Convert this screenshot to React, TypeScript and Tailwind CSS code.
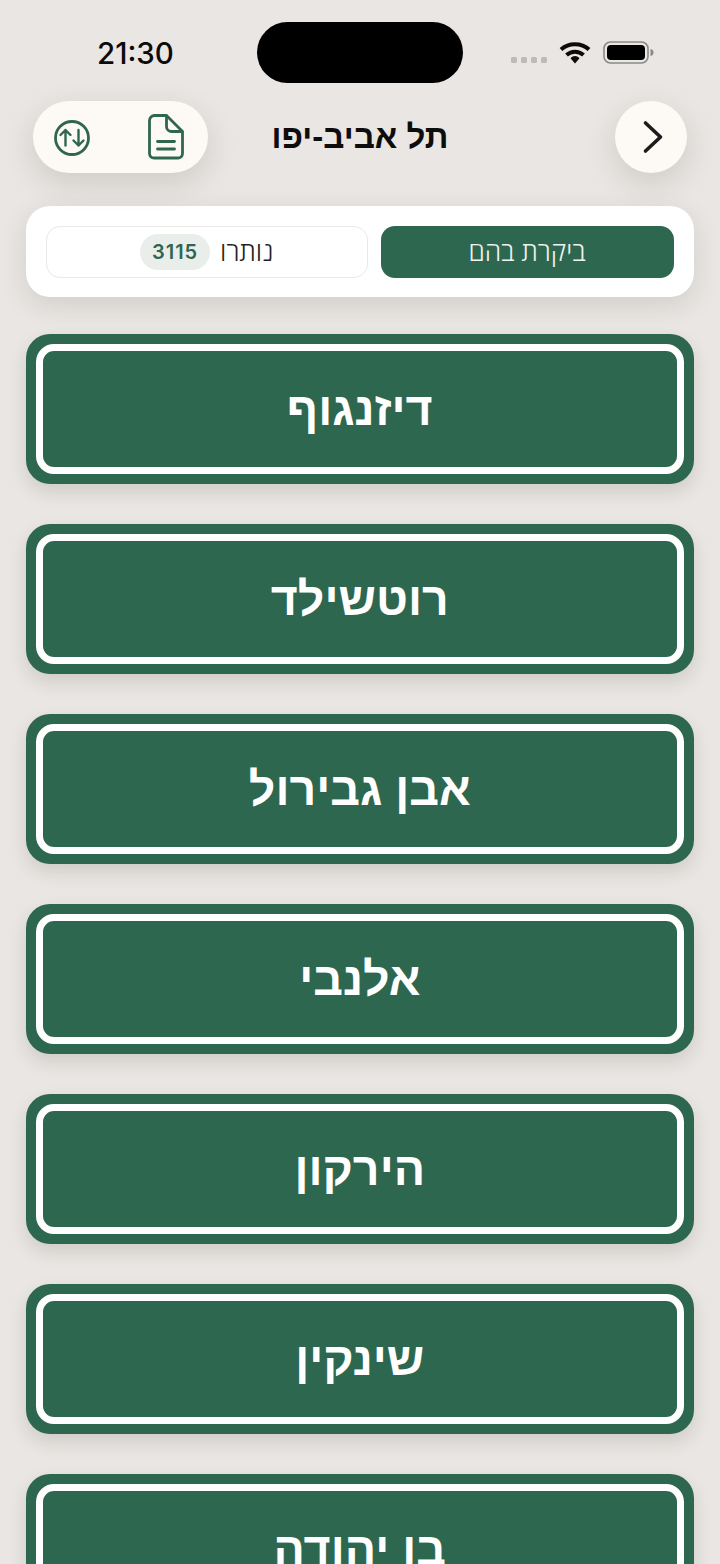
import React from "react";

const streets = ["דיזנגוף", "רוטשילד", "אבן גבירול", "אלנבי", "הירקון", "שינקין", "בן יהודה"];

const StatusBar = () => (
  <div dir="ltr" className="h-[101px] flex items-start relative">
    <div className="ml-[97px] mt-[36px] w-[80px] text-[29.5px] leading-[34px] font-[550] text-[#0b0b0b] font-['Inter',sans-serif]">
      21:30
    </div>
    <div className="ml-[80px] mt-[22px] w-[206px] h-[61px] rounded-full bg-black" />
    <div className="ml-[48px] mt-[57px] flex gap-[4px]">
      <span className="w-[6px] h-[6px] rounded-[1.5px] bg-[#bdbbb9]" />
      <span className="w-[6px] h-[6px] rounded-[1.5px] bg-[#bdbbb9]" />
      <span className="w-[6px] h-[6px] rounded-[1.5px] bg-[#bdbbb9]" />
      <span className="w-[6px] h-[6px] rounded-[1.5px] bg-[#bdbbb9]" />
    </div>
    <svg className="ml-[12px] mt-[40px]" width="32" height="24" viewBox="0 0 32 24" fill="none">
      <path d="M2 9.500C9.500 2.500 22.500 2.500 30 9.500" stroke="#0b0b0b" strokeWidth="4" />
      <path d="M7.500 15C12.500 10.500 19.500 10.500 24.500 15" stroke="#0b0b0b" strokeWidth="4" />
      <path d="M11.500 18.200C14.200 15.400 17.800 15.400 20.500 18.200L16 23.500Z" fill="#0b0b0b" />
    </svg>
    <svg className="ml-[12px] mt-[41px]" width="52" height="23" viewBox="0 0 52 23" fill="none">
      <rect x="1" y="1" width="44" height="21" rx="6.500" stroke="#8a8a88" strokeWidth="1.600" />
      <rect x="4" y="4" width="38" height="15" rx="4" fill="#000" />
      <path d="M47.500 8c2.200.4 3 1.800 3 3.500s-.8 3.100-3 3.500z" fill="#8a8a88" />
    </svg>
  </div>
);

const Header = () => (
  <div className="mx-[32.5px] h-[72px] grid grid-cols-[175px_1fr_175px] items-center relative">
    <button className="w-[72px] h-[72px] mr-[0.5px] pl-[4px] rounded-full bg-[#fdfaf6] flex items-center justify-center shadow-[0_10px_30px_rgba(60,50,40,0.15)]">
      <svg width="22" height="34" viewBox="0 0 22 34" fill="none" stroke="#1c1c1c" strokeWidth="3.600" strokeLinecap="round" strokeLinejoin="round">
        <path d="M3.500 3 18.500 17 3.500 31" />
      </svg>
    </button>
    <h1 className="text-center text-[33px] leading-[40px] font-bold text-[#0d0d0d] font-['Liberation_Sans',sans-serif]">תל אביב-יפו</h1>
    <div className="w-[175px] h-[72px] rounded-full bg-[#fdfaf6] flex items-center justify-between pl-[21.500px] pr-[23.500px] shadow-[0_10px_30px_rgba(60,50,40,0.15)]">
      <svg width="36" height="46" viewBox="0 0 36 46" fill="none" stroke="#2f6650" strokeWidth="2.800" strokeLinecap="round" strokeLinejoin="round">
        <path d="M6.500 1.500h12L34.500 17.500V39.500a4.500 4.500 0 0 1-4.500 4.500H6A4.500 4.500 0 0 1 1.500 39.500V6.500A5 5 0 0 1 6.500 1.500Z" />
        <path d="M18.500 2v10.500a5 5 0 0 0 5 5H34" />
        <path d="M9.500 27.500h17M9.500 35h17" />
      </svg>
      <svg className="mt-[2px]" width="36" height="36" viewBox="0 0 36 36" fill="none" stroke="#2f6650" strokeLinecap="round" strokeLinejoin="round">
        <circle cx="18" cy="18" r="16.500" strokeWidth="2.800" />
        <path d="M11.500 25.500V10M6.500 15l5-5 5 5" strokeWidth="2.400" />
        <path d="M24.500 10V25.500M19.500 20.500l5 5 5-5" strokeWidth="2.400" />
      </svg>
    </div>
  </div>
);

const Tabs = () => (
  <div className="ml-[26px] mr-[26.5px] mt-[33px] h-[91px] rounded-[24px] bg-white p-[20px] flex gap-[13px] shadow-[0_8px_26px_rgba(60,50,40,0.13)]">
    <div className="w-[293px] h-[51.5px] rounded-[14px] bg-[#2e674f] flex items-center justify-center text-[26.5px] font-light text-[#eef3ef] font-['Open_Sans','Liberation_Sans',sans-serif]">
      ביקרת בהם
    </div>
    <div className="flex-1 h-[51.5px] rounded-[14px] border-[1.5px] border-[#e8e8e6] bg-white flex items-center justify-center gap-[10px] text-[26.5px] font-light text-[#222] font-['Open_Sans','Liberation_Sans',sans-serif]">
      <span>נותרו</span>
      <span className="w-[70px] h-[36px] rounded-full bg-[#e9eeeb] flex items-center justify-center text-[20px] font-semibold tracking-[1px] text-[#2f6650] font-['Inter',sans-serif]">
        3115
      </span>
    </div>
  </div>
);

const StreetSign = ({ name }: { name: string }) => (
  <div className="h-[150px] shrink-0 rounded-[24px] bg-[#2e674f] p-[10px] shadow-[0_8px_18px_rgba(60,50,40,0.14)]">
    <div className="h-full rounded-[18px] border-[7px] border-white flex items-center justify-center">
      <span className="text-[46.5px] leading-[56px] font-bold text-white font-['Liberation_Sans',sans-serif]">{name}</span>
    </div>
  </div>
);

export default function App() {
  return (
    <div dir="rtl" className="w-[720px] h-[1564px] overflow-hidden bg-[#e9e6e3]">
      <StatusBar />
      <Header />
      <Tabs />
      <div className="ml-[26px] mr-[26.5px] mt-[37px] flex flex-col gap-[40px]">
        {streets.map((s) => (
          <StreetSign key={s} name={s} />
        ))}
      </div>
    </div>
  );
}
